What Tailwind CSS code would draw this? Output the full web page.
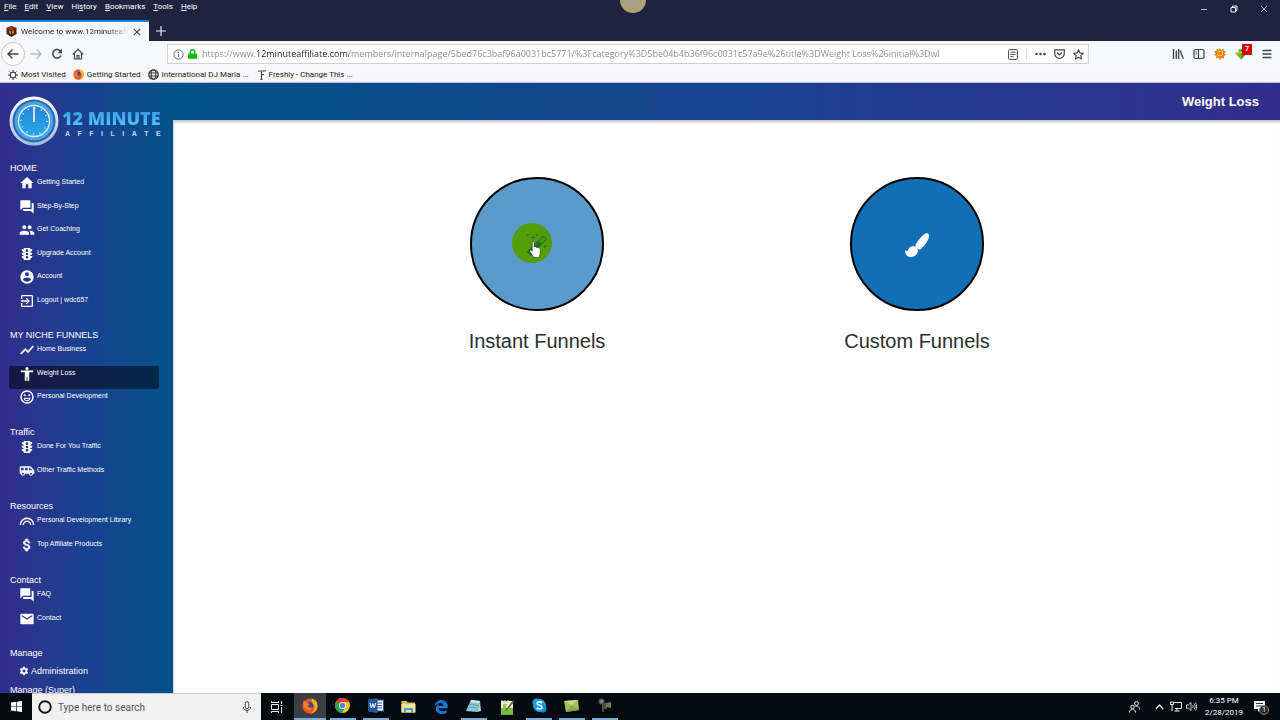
<!DOCTYPE html>
<html lang="en">
<head>
<meta charset="utf-8">
<title>12 Minute Affiliate – Weight Loss</title>
<script src="https://cdn.jsdelivr.net/npm/@tailwindcss/browser@4"></script>
</head>
<body class="relative flex h-screen flex-col overflow-hidden bg-white font-['Roboto',sans-serif] text-[9px] text-[#222]">

<svg class="hidden" aria-hidden="true">
  <symbol id="traffic" viewBox="0 0 24 24"><path d="M20 10h-3V8.860c1.720-.45 3-2 3-3.860h-3V4c0-.55-.45-1-1-1H8c-.55 0-1 .45-1 1v1H4c0 1.860 1.280 3.410 3 3.860V10H4c0 1.860 1.280 3.410 3 3.860V15H4c0 1.860 1.280 3.410 3 3.860V20c0 .55.45 1 1 1h8c.55 0 1-.45 1-1v-1.140c1.720-.45 3-2 3-3.860h-3v-1.140c1.720-.45 3-2 3-3.860zm-8 9a2 2 0 110-4 2 2 0 010 4zm0-5a2 2 0 110-4 2 2 0 010 4zm0-5a2 2 0 01-2-2 2 2 0 114 0 2 2 0 01-2 2z"/></symbol>
  <symbol id="forum" viewBox="0 0 24 24"><path d="M21 6h-2v9H6v2c0 .55.45 1 1 1h11l4 4V7c0-.55-.45-1-1-1zm-4 6V3c0-.55-.45-1-1-1H3c-.55 0-1 .45-1 1v14l4-4h10c.55 0 1-.45 1-1z"/></symbol>
</svg>

<header class="shrink-0">
  <div class="flex h-[20px] items-start justify-between bg-[#202340] text-white">
    <nav class="flex gap-[8px] pl-1 text-[8px] leading-[13px]" aria-label="Menu bar">
      <button><u>F</u>ile</button><button><u>E</u>dit</button><button><u>V</u>iew</button><button>Hi<u>s</u>tory</button><button><u>B</u>ookmarks</button><button><u>T</u>ools</button><button><u>H</u>elp</button>
    </nav>
    <div class="flex gap-[22px] pr-3 pt-[5px]">
      <button aria-label="Minimize"><svg class="h-2 w-2" viewBox="0 0 8 8" stroke="#bbb" fill="none"><path d="M1 4.500h6"/></svg></button>
      <button aria-label="Restore"><svg class="h-2 w-2" viewBox="0 0 8 8" stroke="#eee" fill="none"><path d="M1 2.500h4.500v4.500H1zM2.500 2.500V1h4.500v4.500H5.500"/></svg></button>
      <button aria-label="Close"><svg class="h-2 w-2" viewBox="0 0 8 8" stroke="#ddd" stroke-width=".8" fill="none"><path d="M1 1l6 6M7 1L1 7"/></svg></button>
    </div>
  </div>
  <div class="flex h-[21px] bg-[#202340]">
    <div class="flex w-[149px] items-center border-t-2 border-[#1587e0] bg-[#f6f8fb] pl-[6px] text-[8px]">
      <svg class="mr-1 h-[11px] w-[11px] shrink-0" viewBox="0 0 11 11"><path d="M5.500 0L10.500 2v6L5.500 11 .5 8V2z" fill="#4b2411"/><path d="M5.500 0L10.500 2 5.500 4.500.5 2z" fill="#8a4318"/><path d="M3 4l2.500 1.500L8 4v3L5.500 8.500 3 7z" fill="#d08028"/><path d="M5.500 5v4" stroke="#4b2411"/></svg>
      <span class="w-[108px] overflow-hidden bg-linear-to-r from-[#222] from-80% to-transparent bg-clip-text whitespace-nowrap text-transparent">Welcome to www.12minuteaff</span>
      <button class="ml-1" aria-label="Close tab"><svg class="h-2 w-2" viewBox="0 0 8 8" stroke="#444" stroke-width="1.100"><path d="M.8.8l6.400 6.400M7.200.8L.8 7.200"/></svg></button>
    </div>
    <button class="ml-[7px]" aria-label="New tab"><svg class="h-[10px] w-[10px]" viewBox="0 0 10 10" stroke="#e4e6ee" stroke-width="1.200"><path d="M5 0v10M0 5h10"/></svg></button>
  </div>
  <div class="flex h-[26px] items-center bg-[#f6f8fb] text-[#444]">
    <div class="flex w-[167px] items-center gap-[9px] pl-[1px]">
      <button class="flex h-6 w-6 items-center justify-center rounded-full border border-[#c5c5c9] bg-white" aria-label="Back"><svg class="h-3 w-3" viewBox="0 0 12 12" fill="none" stroke="currentColor" stroke-width="1.500"><path d="M11.500 6H1M5.500 1.500L1 6l4.500 4.500"/></svg></button>
      <button aria-label="Forward" class="text-[#bbb]"><svg class="-ml-1 h-3 w-3" viewBox="0 0 12 12" fill="none" stroke="currentColor" stroke-width="1.300"><path d="M.5 6H11M6.500 1.500L11 6l-4.500 4.500"/></svg></button>
      <button aria-label="Reload"><svg class="h-3 w-3" viewBox="0 0 12 12" fill="none" stroke="currentColor" stroke-width="1.500"><path d="M9.700 3.500A4.300 4.300 0 1010 7.500"/><path d="M11 .8v4.400H6.600z" fill="currentColor" stroke="none"/></svg></button>
      <button aria-label="Home"><svg class="h-3 w-3" viewBox="0 0 12 12" fill="none" stroke="currentColor" stroke-width="1.200"><path d="M.8 6.500L6 1.200l5.200 5.300M2.500 5.500V11h7V5.500M5 11V7.500h2V11"/></svg></button>
    </div>
    <div class="flex h-5 w-[922px] items-center border border-[#cfd1d6] bg-white pl-[5px]">
      <button aria-label="Site information"><svg class="h-[11px] w-[11px]" viewBox="0 0 11 11" fill="none" stroke="#666"><circle cx="5.500" cy="5.500" r="4.600"/><path d="M5.500 4.800v3.200M5.500 2.700v1.200"/></svg></button>
      <svg class="ml-[4px] h-[10px] w-[9px]" viewBox="0 0 9 10"><path d="M2.200 5V3a2.300 2.300 0 014.600 0v2" fill="none" stroke="#1cb31c" stroke-width="1.400"/><rect y="4.400" width="9" height="5.400" rx="1" fill="#12bc00"/></svg>
      <input aria-label="Address" class="ml-[5px] min-w-0 flex-1 bg-[linear-gradient(90deg,#8a8a8a_53px,#222_53px,#222_147px,#8a8a8a_147px)] bg-clip-text font-['Open_Sans',sans-serif] text-[9px] text-transparent outline-none" value="https://www.12minuteaffiliate.com/members/internalpage/5bed76c3baf96a0031bc5771/%3Fcategory%3D5be04b4b36f96c0031c57a9e%26title%3DWeight Loss%26initial%3Dwl">
      <div class="flex items-center gap-2 pr-1">
        <button aria-label="Reader view"><svg class="h-[11px] w-[10px]" viewBox="0 0 10 11" fill="none" stroke="currentColor"><rect x=".6" y=".6" width="8.800" height="9.800" rx="1"/><path d="M2.500 3.200h5M2.500 5.400h5M2.500 7.600h3"/></svg></button>
        <span class="h-3 border-l border-[#ddd]"></span>
        <button aria-label="Page actions"><svg class="h-3 w-[11px]" viewBox="0 0 11 12" fill="currentColor"><circle cx="1.500" cy="6" r="1.300"/><circle cx="5.500" cy="6" r="1.300"/><circle cx="9.500" cy="6" r="1.300"/></svg></button>
        <button aria-label="Save to Pocket"><svg class="h-[10px] w-[11px]" viewBox="0 0 11 10" fill="none" stroke="currentColor" stroke-width="1.200"><path d="M.7.8h9.600v3.700a4.800 4.800 0 01-9.600 0zM3 3.500L5.500 6 8 3.500"/></svg></button>
        <button aria-label="Bookmark"><svg class="h-[11px] w-[11px]" viewBox="0 0 11 11" fill="none" stroke="currentColor" stroke-width="1.100" stroke-linejoin="round"><path d="M5.500.8l1.400 3.100 3.400.4-2.500 2.300.7 3.400-3-1.700-3 1.700.7-3.400L.7 4.300l3.400-.4z"/></svg></button>
      </div>
    </div>
    <div class="ml-auto flex items-center gap-[9px] pr-2">
      <button aria-label="Library"><svg class="h-3 w-3" viewBox="0 0 12 12" stroke="currentColor" stroke-width="1.400"><path d="M1.500 1v10M4.300 2.500V11M6.700 1v10M8.300 2.500l3 8.500"/></svg></button>
      <button aria-label="Sidebars"><svg class="h-3 w-3" viewBox="0 0 12 12" fill="none" stroke="currentColor" stroke-width="1.200"><rect x="1" y="1.500" width="10" height="9" rx="1.500"/><path d="M5.500 1.500v9M2.500 4h1.500M2.500 6h1.500"/></svg></button>
      <button aria-label="Splat extension"><svg class="h-3 w-3" viewBox="0 0 12 12"><path d="M6 0l1.300 2L9.500.8 9.600 3l2.200.2L10.500 5.500l1.400 1.800-2 .6.2 2.600-2.400-.8L6 12 4.500 9.800l-2.600.8.4-2.600L.1 7l1.400-1.700L.2 3l2.300-.1L2.700.8l2 1.100z" fill="#f08020"/><path d="M3 4l2-1 1 1 2-1 1 1-1 1 1 1-2 2-1-1-2 1-1-2" fill="none" stroke="#ffd23c"/><path d="M2.700 2.800L4.500.9M8 2.500L9.600.8" stroke="#62a620"/></svg></button>
      <button class="relative mr-[6px]" aria-label="Downloads, 7"><svg class="h-3 w-3" viewBox="0 0 12 12"><path d="M3.500 1h5v4H12l-6 6.500L0 5h3.500z" fill="#72b632"/><path d="M6 1h2.500v4H12L6 11.500z" fill="#4d9426"/><path d="M1 4h7v1.500H1z" fill="#d8c447"/></svg><span class="absolute -top-1 left-[7px] h-[11px] w-[10px] bg-[#d7000f] text-[7px] leading-[11px] font-bold text-white">7</span></button>
      <button aria-label="Open menu"><svg class="h-3 w-[10px]" viewBox="0 0 10 12" stroke="currentColor" stroke-width="1.300"><path d="M.5 2.500h9M.5 6h9M.5 9.500h9"/></svg></button>
    </div>
  </div>
  <nav class="flex h-[16px] items-center gap-[7px] border-b border-[#b9bcd0] bg-[#f7f7f9] pl-2 text-[8px] leading-[15px]" aria-label="Bookmarks">
    <a href="#" class="flex items-center gap-[3px]"><svg class="h-[10px] w-[10px]" viewBox="0 0 10 10" fill="none" stroke="#444"><circle cx="5" cy="5" r="2.800" stroke-width="1.200"/><path d="M5 0v2M5 8v2M0 5h2M8 5h2M1.500 1.500l1.300 1.300M7.200 7.200l1.300 1.300M8.500 1.500L7.200 2.800M2.800 7.200L1.500 8.500"/></svg>Most Visited</a>
    <a href="#" class="flex items-center gap-[3px]"><svg class="h-[11px] w-[11px]" viewBox="0 0 32 32"><use href="#firefox"/></svg>Getting Started</a>
    <a href="#" class="flex items-center gap-[3px]"><svg class="h-[11px] w-[11px]" viewBox="0 0 11 11" fill="none" stroke="#333"><circle cx="5.500" cy="5.500" r="4.700" stroke-width="1.200"/><ellipse cx="5.500" cy="5.500" rx="2.300" ry="4.700"/><path d="M1 4h9M1 7h9"/></svg>International DJ Maria ...</a>
    <a href="#" class="flex items-center gap-[3px]"><svg class="ml-[2px] h-[10px] w-[8px]" viewBox="0 0 8 10" fill="none" stroke="#333"><path d="M0 1.500C2 .5 3 1.500 8 .8M3.500 1.500V9.500M3.500 4.700h2.500M2.500 9.500h2"/></svg>Freshly - Change This ...</a>
  </nav>
</header>

<div class="flex min-h-0 flex-1 font-['Liberation_Sans',Arial,sans-serif]">
  <aside class="w-[173px] shrink-0 overflow-hidden bg-linear-to-r from-[#302e8b] via-[#17428f] to-[#00528b] text-white">
    <a href="#" class="flex h-[78px] items-start gap-[3px] pl-[9px] pt-[13px]" aria-label="12 Minute Affiliate">
      <svg class="h-[50px] w-[50px] shrink-0" viewBox="0 0 50 50">
        <defs>
          <linearGradient id="rim" x2="0" y2="1"><stop stop-color="#fff"/><stop offset="1" stop-color="#a9bad6"/></linearGradient>
          <linearGradient id="face" x2="0" y2="1"><stop stop-color="#2785d4"/><stop offset="1" stop-color="#27a9ee"/></linearGradient>
        </defs>
        <circle cx="25" cy="25" r="24.500" fill="url(#rim)"/>
        <circle cx="25" cy="25" r="21.500" fill="#2567b4"/><circle cx="25" cy="25" r="19.500" fill="#4aa5e4"/>
        <circle cx="25" cy="25" r="15.500" fill="url(#face)" stroke="#d9f2ff" stroke-width="1.300"/>
        <circle cx="25" cy="25" r="13" fill="none" stroke="#fff" stroke-width="1.400" stroke-dasharray="1 5.807"/>
        <path d="M25 11v15" stroke="#fff" stroke-width="1.500"/>
      </svg>
      <span class="flex flex-col pt-[10px]"><span class="bg-linear-to-b from-[#2b93e2] to-[#62cbff] bg-clip-text font-['Open_Sans',sans-serif] text-[18px] leading-[24px] font-extrabold whitespace-nowrap text-transparent">12 MINUTE</span><span class="flex justify-between pl-[3px] text-[7px] leading-[8px] font-bold text-[#c9d8f0]"><span>A</span><span>F</span><span>F</span><span>I</span><span>L</span><span>I</span><span>A</span><span>T</span><span>E</span></span></span>
    </a>
    <nav class="pl-[9px] text-[7px] leading-[14px]" aria-label="Members">
      <h2 class="pl-px text-[9px] leading-[14px]">HOME</h2>
      <ul class="mb-3 flex h-[141px] w-[150px] flex-col">
        <li class="flex-1"><a href="#" class="flex h-full items-start gap-[2px] pl-[10px]"><svg class="h-4 w-4" viewBox="0 0 24 24" fill="currentColor"><path d="M10 20v-6h4v6h5v-8h3L12 3 2 12h3v8z"/></svg>Getting Started</a></li>
        <li class="flex-1"><a href="#" class="flex h-full items-start gap-[2px] pl-[10px]"><svg class="h-4 w-4" fill="currentColor"><use href="#forum"/></svg>Step-By-Step</a></li>
        <li class="flex-1"><a href="#" class="flex h-full items-start gap-[2px] pl-[10px]"><svg class="h-4 w-4" viewBox="0 0 24 24" fill="currentColor"><path d="M16 11a3 3 0 100-6 3 3 0 000 6zm-8 0a3 3 0 100-6 3 3 0 000 6zm0 2c-2.330 0-7 1.170-7 3.500V19h14v-2.500c0-2.330-4.670-3.500-7-3.500zm8 0c-.29 0-.62.02-.97.05 1.160.84 1.970 1.970 1.970 3.450V19h6v-2.500c0-2.330-4.670-3.500-7-3.500z"/></svg>Get Coaching</a></li>
        <li class="flex-1"><a href="#" class="flex h-full items-start gap-[2px] pl-[10px]"><svg class="h-4 w-4" fill="currentColor"><use href="#traffic"/></svg>Upgrade Account</a></li>
        <li class="flex-1"><a href="#" class="flex h-full items-start gap-[2px] pl-[10px]"><svg class="h-4 w-4" viewBox="0 0 24 24" fill="currentColor"><path d="M12 2a10 10 0 100 20 10 10 0 000-20zm0 3a3 3 0 110 6 3 3 0 010-6zm0 14.200a7.200 7.200 0 01-6-3.220c.03-1.990 4-3.080 6-3.080s5.970 1.090 6 3.080a7.200 7.200 0 01-6 3.220z"/></svg>Account</a></li>
        <li class="flex-1"><a href="#" class="flex h-full items-start gap-[2px] pl-[10px]"><svg class="h-4 w-4" viewBox="0 0 24 24" fill="currentColor"><path d="M10.090 15.590L11.500 17l5-5-5-5-1.410 1.410L12.670 11H3v2h9.670l-2.580 2.590zM19 3H5a2 2 0 00-2 2v4h2V5h14v14H5v-4H3v4a2 2 0 002 2h14a2 2 0 002-2V5a2 2 0 00-2-2z"/></svg>Logout | wdc657</a></li>
      </ul>
      <h2 class="pl-px text-[9px] leading-[14px]">MY NICHE FUNNELS</h2>
      <ul class="mb-3 flex h-[71px] w-[150px] flex-col">
        <li class="flex-1"><a href="#" class="flex h-full items-start gap-[2px] pl-[10px]"><svg class="h-4 w-4" viewBox="0 0 24 24" fill="currentColor"><path d="M3.500 18.490l6-6.010 4 4L22 6.920l-1.410-1.410-7.090 7.970-4-4L2 16.990z" stroke="currentColor" stroke-width=".6"/></svg>Home Business</a></li>
        <li class="flex-1"><a href="#" aria-current="page" class="flex h-full items-start gap-[2px] rounded-[2px] bg-linear-to-r from-[#161746] to-[#032747] pl-[10px]"><svg class="h-4 w-4" viewBox="0 0 24 24" fill="currentColor"><path d="M12 2a2 2 0 110 4 2 2 0 010-4zm9 7h-6v13h-2v-6h-2v6H9V9H3V7h18z" stroke="currentColor" stroke-width=".7"/></svg>Weight Loss</a></li>
        <li class="flex-1"><a href="#" class="flex h-full items-start gap-[2px] pl-[10px]"><svg class="h-4 w-4" viewBox="0 0 24 24" fill="none" stroke="currentColor" stroke-width="2.200"><circle cx="12" cy="12" r="9"/><path d="M7.500 14h9a4.500 3.500 0 01-9 0z" stroke-width="1.500"/><circle cx="8.500" cy="9.500" r="1.500" fill="currentColor" stroke="none"/><circle cx="15.500" cy="9.500" r="1.500" fill="currentColor" stroke="none"/></svg>Personal Development</a></li>
      </ul>
      <h2 class="pl-px text-[9px] leading-[14px]">Traffic</h2>
      <ul class="mb-3 flex h-[48px] w-[150px] flex-col">
        <li class="flex-1"><a href="#" class="flex h-full items-start gap-[2px] pl-[10px]"><svg class="h-4 w-4" fill="currentColor"><use href="#traffic"/></svg>Done For You Traffic</a></li>
        <li class="flex-1"><a href="#" class="flex h-full items-start gap-[2px] pl-[10px]"><svg class="h-4 w-4" viewBox="0 0 24 24" fill="currentColor"><path d="M17 5H3a2 2 0 00-2 2v9h2a3 3 0 006 0h6a3 3 0 006 0h2v-5zM3 11V7h4v4zm3 6.500a1.500 1.500 0 110-3 1.500 1.500 0 010 3zM13 11H9V7h4zm5 6.500a1.500 1.500 0 110-3 1.500 1.500 0 010 3zM15 11V7h1l4 4z"/></svg>Other Traffic Methods</a></li>
      </ul>
      <h2 class="pl-px text-[9px] leading-[14px]">Resources</h2>
      <ul class="mb-3 flex h-[48px] w-[150px] flex-col">
        <li class="flex-1"><a href="#" class="flex h-full items-start gap-[2px] pl-[10px]"><svg class="h-4 w-4" viewBox="0 0 24 24" fill="none" stroke="currentColor" stroke-width="2.200"><path d="M2 18a10 10 0 0120 0M6.500 18a5.500 5.500 0 0111 0"/></svg>Personal Development Library</a></li>
        <li class="flex-1"><a href="#" class="flex h-full items-start gap-[2px] pl-[10px]"><svg class="h-4 w-4" viewBox="0 0 24 24" fill="currentColor"><path d="M11.800 10.900c-2.270-.59-3-1.200-3-2.150 0-1.090 1.010-1.850 2.700-1.850 1.780 0 2.440.85 2.500 2.100h2.210c-.07-1.720-1.120-3.300-3.210-3.810V3h-3v2.160c-1.940.42-3.500 1.680-3.500 3.610 0 2.310 1.910 3.460 4.700 4.130 2.500.6 3 1.480 3 2.410 0 .69-.49 1.790-2.700 1.790-2.060 0-2.870-.92-2.980-2.100h-2.200c.12 2.190 1.760 3.420 3.680 3.830V21h3v-2.150c1.950-.37 3.500-1.500 3.500-3.550 0-2.840-2.430-3.810-4.700-4.400z" stroke="currentColor"/></svg>Top Affiliate Products</a></li>
      </ul>
      <h2 class="pl-px text-[9px] leading-[14px]">Contact</h2>
      <ul class="mb-3 flex h-[47px] w-[150px] flex-col">
        <li class="flex-1"><a href="#" class="flex h-full items-start gap-[2px] pl-[10px]"><svg class="h-4 w-4" fill="currentColor"><use href="#forum"/></svg>FAQ</a></li>
        <li class="flex-1"><a href="#" class="flex h-full items-start gap-[2px] pl-[10px]"><svg class="h-4 w-4" viewBox="0 0 24 24" fill="currentColor"><path d="M20 4H4a2 2 0 00-2 2v12a2 2 0 002 2h16a2 2 0 002-2V6a2 2 0 00-2-2zm0 4l-8 5-8-5V6l8 5 8-5z"/></svg>Contact</a></li>
      </ul>
      <h2 class="pl-px text-[9px] leading-[14px]">Manage</h2>
      <a href="#" class="mt-1 mb-[5px] flex items-center gap-[2px] pl-[10px] text-[9px] leading-[14px]"><svg class="h-[10px] w-[10px]" viewBox="0 0 24 24"><path fill="currentColor" d="M19.400 13l.1-1-.1-1 2.200-1.700c.2-.1.300-.4.100-.6l-2-3.500c-.1-.2-.4-.3-.6-.2l-2.500 1-1.700-1L14.500 2.400a.5.5 0 00-.5-.4h-4a.5.5 0 00-.5.400L9.100 5l-1.700 1-2.500-1c-.2-.1-.5 0-.6.200l-2 3.500c-.1.200 0 .5.100.6L4.600 11l-.1 1 .1 1-2.200 1.700c-.1.100-.2.400-.1.600l2 3.500c.1.200.4.300.6.200l2.500-1 1.700 1 .4 2.600c0 .2.200.4.500.4h4c.3 0 .5-.2.500-.4l.4-2.600 1.700-1 2.500 1c.2.100.5 0 .6-.2l2-3.500c.1-.2.100-.5-.1-.6zM12 15.500a3.500 3.500 0 110-7 3.500 3.500 0 010 7z"/></svg>Administration</a>
      <h2 class="pl-px text-[9px] leading-[14px]">Manage (Super)</h2>
    </nav>
  </aside>

  <div class="flex min-w-0 flex-1 flex-col">
    <div class="flex h-[37px] shrink-0 items-center justify-end bg-linear-to-r from-[#00528b] via-[#17448f] to-[#302e8b] pr-[21px]">
      <h1 class="text-[13px] font-bold text-white">Weight Loss</h1>
    </div>
    <main class="flex flex-1 justify-center border-l border-[#ccd5de] pt-[57px] text-[20px] leading-6 text-[#2b2e31] shadow-[inset_0_4px_3px_-2px_#b8bcc4]">
      <a href="#" class="flex w-[380px] flex-col items-center gap-[18px]">
        <span class="relative flex h-[134px] w-[134px] items-center justify-center rounded-full border-2 border-black bg-[#5b9bcb]">
          <span class="absolute top-[44px] left-[40px] h-[40px] w-[40px] rounded-full bg-[#549d06]"></span>
          <svg class="relative h-6 w-6" viewBox="0 0 24 24" fill="none" stroke="#207a28"><path d="M2 20L18 4l3.500 3.500L5.500 23.500z" fill="#23701c"/><path d="M13.500 9L18.500 4 21.500 7 16.500 12z" fill="#4a990d" stroke="#207a28"/><path d="M8 3v5M5.500 5.500h5M3 2v2M2 3h2M12 2v2M11 3h2M20 13v3M18.500 14.500h3" stroke-width=".9"/></svg>
          <svg class="absolute top-[62px] left-[57px] h-[18px] w-3" viewBox="0 0 12 18" fill="#fff" stroke="#222" stroke-width=".6"><path d="M3.200 1.500c0-1.400 2-1.400 2 0V6c.6-.7 1.800-.5 2 .4.600-.5 1.700-.3 1.900.6.800-.5 2.100-.1 2.100 1.100v4.200c0 1.600-1 2.300-1.200 4.200H4.500C4.200 14.700 1.900 12.500.8 10.300c-.5-1.200.7-1.900 1.600-1l.8.9z"/></svg>
        </span>
        Instant Funnels
      </a>
      <a href="#" class="flex w-[380px] flex-col items-center gap-[18px]">
        <span class="flex h-[134px] w-[134px] items-center justify-center rounded-full border-2 border-black bg-[#126fb3]">
          <svg class="mt-[2px] h-6 w-6" viewBox="0 0 24 24" fill="#fff"><path d="M20 .7c2.500-1.300 5 .6 4 3.600-1.200 4-4.300 8.300-7.800 11.500-1.300 1.200-3.200.7-4.500-.5-1.300-1.300-1.800-2.800-.8-4.300C13.400 7 17 2.600 20 .7z"/><path d="M7.500 13.300c3.200-.3 5.800 2.400 5.300 5.200-.7 3.500-3.800 5.500-7.300 5.500-3.500 0-5.500-3-5.500-7 1.200.9 2 1.500 2.700.5 1-2.200 2.300-4 4.800-4.200z"/></svg>
        </span>
        Custom Funnels
      </a>
    </main>
  </div>
</div>

<footer class="flex h-[27px] shrink-0 bg-[#060b11] text-white">
  <button class="flex w-8 items-center justify-center" aria-label="Start"><svg class="h-[11px] w-[11px]" viewBox="0 0 11 11" fill="#fff"><path d="M0 1.500L5 .8v4.400H0zM5.700.7L11 0v5.200H5.700zM0 5.800h5v4.400l-5-.7zM5.700 5.800H11V11l-5.300-.7z"/></svg></button>
  <div class="flex w-[229px] items-center border-t border-[#ccc] bg-[#f1f1f1] pl-[6px]">
    <svg class="h-[14px] w-[14px]" viewBox="0 0 14 14"><circle cx="7" cy="7" r="5.800" fill="none" stroke="#151515" stroke-width="1.900"/></svg>
    <input type="search" aria-label="Search" placeholder="Type here to search" class="ml-[6px] w-[180px] bg-transparent text-[10px] outline-none placeholder:text-[#555]">
    <button class="ml-1" aria-label="Voice search"><svg class="h-3 w-[10px]" viewBox="0 0 10 12" fill="none" stroke="#444"><rect x="3.200" y=".6" width="3.600" height="7" rx="1.800"/><path d="M1.500 6c0 4.500 7 4.500 7 0M5 9.400V12"/></svg></button>
  </div>
  <div class="flex w-[360px]">
    <button class="flex flex-1 items-center justify-center" aria-label="Task view"><svg class="h-3 w-3" viewBox="0 0 12 12" fill="none" stroke="#eee"><path d="M.5 3.500h7v5h-7zM.5 0v1.500h7V0M.5 12v-1.500h7V12M10.500 0v3M10.500 6v6M9.500 4.500h2"/></svg></button>
    <button class="flex flex-1 items-center justify-center border-b-2 border-[#7ba9d6] bg-[#3b3e42]" aria-label="Firefox"><svg class="h-4 w-4" viewBox="0 0 32 32"><symbol id="firefox" viewBox="0 0 32 32"><circle cx="16" cy="16" r="15" fill="#f4511e"/><path d="M19 1c9 2 13 9 12 16-1 9-8 14-15 14 7-3 10-8 9-13-1-6-6-7-6-17z" fill="#ffb31a"/><circle cx="15" cy="15" r="7.500" fill="#3a48a8"/><path d="M3 5c3 2 5 4 8 4l4 4c-3 1-4 3-2 5s5 2 8 0c-1 5-5 7-10 6C4 22 1 15 3 5z" fill="#ff7a18"/></symbol><use href="#firefox"/></svg></button>
    <button class="flex flex-1 items-center justify-center" aria-label="Chrome"><span class="flex h-full w-[26px] items-center justify-center border-b-2 border-[#7ba9d6]"><svg class="h-[15px] w-[15px]" viewBox="0 0 30 30"><circle cx="15" cy="15" r="15" fill="#fbc116"/><path d="M15 15L2 7.500A15 15 0 0128 8H15z" fill="#e33b2e"/><path d="M2 7.500A15 15 0 0014 30l7-12-6-3z" fill="#2d9f48"/><circle cx="15" cy="15" r="7" fill="#fff"/><circle cx="15" cy="15" r="5.500" fill="#4285f4"/></svg></span></button>
    <button class="flex flex-1 items-center justify-center" aria-label="Word"><span class="flex h-full w-[26px] items-center justify-center border-b-2 border-[#7ba9d6]"><svg class="h-[15px] w-4" viewBox="0 0 16 15"><rect x="8" y="2" width="7.500" height="11" fill="#fff" stroke="#2b579a"/><path d="M9 5h5M9 7.500h5M9 10h5" stroke="#2b579a"/><path d="M0 1.500L9.500 0v15L0 13.500z" fill="#2b579a"/><path d="M2 5l1.400 5L4.800 5.500 6.200 10 7.600 5" stroke="#fff" fill="none"/></svg></span></button>
    <button class="flex flex-1 items-center justify-center" aria-label="File Explorer"><svg class="h-[13px] w-[15px]" viewBox="0 0 15 13"><path d="M.5 1h5l1 1.500H14v10H.5z" fill="#e7bd55"/><path d="M.5 4H14.500v8.500H.5z" fill="#fbe497"/><path d="M3 12.500V8h9v4.500h-2V10H5v2.500z" fill="#46a0d8"/></svg></button>
    <button class="flex flex-1 items-center justify-center" aria-label="Edge"><svg class="h-[14px] w-[14px]" viewBox="0 0 28 28"><path d="M1 12.500C2 5 7.500 0 15 0c8 0 12.500 6 12.500 13v3.500H9.500c.3 7 9.500 7.500 15.500 3.500v6C15 30.500 3.500 27.500 3.500 18c0-5 3-8.500 6.500-10.500-1 1.500-1.300 2.500-1.400 4h10.200C19 5 9 3.500 1 12.500z" fill="#1a78d2"/></svg></button>
    <button class="flex flex-1 items-center justify-center" aria-label="Notepad"><span class="flex h-full w-[26px] items-center justify-center border-b-2 border-[#7ba9d6]"><svg class="h-[14px] w-[15px]" viewBox="0 0 15 14"><path d="M5 1l9 1-3 11L0 12z" fill="#8fc9d6"/><path d="M5 1l9 1-.5 2-9-1z" fill="#d6eef0"/><path d="M14 2l1 10-4 1z" fill="#b8d2d8"/><path d="M4 5.500l8 .8M3 8l8 .8" stroke="#5ba2b8"/></svg></span></button>
    <button class="flex flex-1 items-center justify-center" aria-label="Notepad++"><svg class="h-4 w-[14px]" viewBox="0 0 14 16"><path d="M1 2h12v13.500H1z" fill="#e8f1cf"/><path d="M1 9h12v6.500H1z" fill="#77bd3b"/><path d="M2 1v2M5 1v2M8 1v2" stroke="#ccc"/><path d="M13.500 1L6 10l-1 2 2-1L14 3z" fill="#5d5230"/><path d="M3 6h4M3 8h3" stroke="#4b8f2d"/></svg></button>
    <button class="flex flex-1 items-center justify-center" aria-label="Skype"><span class="flex h-full w-[26px] items-center justify-center border-b-2 border-[#7ba9d6]"><svg class="h-[15px] w-[15px]" viewBox="0 0 15 15"><circle cx="7.500" cy="7.500" r="6.500" fill="#10a5e8"/><circle cx="4.500" cy="4.500" r="4" fill="#10a5e8"/><circle cx="10.500" cy="10.500" r="4" fill="#0b90d8"/><path d="M10 5C8.800 3.300 5 3.500 5.200 5.500 5.500 7.700 10 6.800 10 9.300c0 2.200-4 2.200-5.200.4" fill="none" stroke="#fff" stroke-width="1.600"/></svg></span></button>
    <button class="flex flex-1 items-center justify-center" aria-label="Sticky notes"><span class="flex h-full w-[26px] items-center justify-center border-b-2 border-[#7ba9d6]"><svg class="h-[14px] w-[15px]" viewBox="0 0 15 14"><path d="M0 2l14-1 1 10-13 2z" fill="#a6bb5b"/><path d="M0 2l7 4 7-5z" fill="#c8d98a"/><path d="M2 13l5-7 8 5" fill="#8ca344"/></svg></span></button>
    <button class="flex flex-1 items-center justify-center" aria-label="Camera recorder"><span class="flex h-full w-[26px] items-center justify-center border-b-2 border-[#7ba9d6]"><svg class="h-[15px] w-[14px]" viewBox="0 0 14 15"><circle cx="3.500" cy="3.500" r="3" fill="#55595a"/><circle cx="3.500" cy="3.500" r="1.200" fill="#999"/><path d="M4 5h5v6H6v3H4z" fill="#4b4e4b"/><path d="M8 5l5-1v6l-5-1z" fill="#6c8148"/></svg></span></button>
  </div>
  <div class="ml-auto flex items-center pr-[14px]">
    <button aria-label="People"><svg class="mr-[15px] h-3 w-[11px]" viewBox="0 0 11 12" fill="none" stroke="#eee"><circle cx="3.500" cy="6" r="1.800"/><path d="M.5 11.500c0-4.500 6-4.500 6 0"/><circle cx="7.500" cy="2.500" r="1.900"/><path d="M6.500 5.500c2-1 4 .5 4 3"/></svg></button>
    <button aria-label="Show hidden icons"><svg class="mr-[6px] h-2 w-[9px]" viewBox="0 0 9 8" fill="none" stroke="#eee" stroke-width="1.200"><path d="M.8 6l3.700-4 3.700 4"/></svg></button>
    <button aria-label="Network"><svg class="mr-1 h-[11px] w-3" viewBox="0 0 12 11" fill="none" stroke="#eee"><path d="M4 1.500h7.500v6H5M7 7.500v2.500M4.500 10h5M.5 1h3v2.500h-3zM2 3.500V10"/></svg></button>
    <button aria-label="Volume"><svg class="mr-[8px] h-[11px] w-[11px]" viewBox="0 0 11 11" fill="none" stroke="#ddd" stroke-width=".9"><path d="M.5 3.800h2L5 1.500v8L2.500 7.200h-2zM6.500 4c.8 1 .8 2 0 3M8 2.500c1.500 2 1.500 4 0 6M9.500 1.500c1.500 2.500 1.500 5.500 0 8"/></svg></button>
    <time class="mr-[11px] text-center text-[8px] leading-3">6:35 PM<br>2/28/2019</time>
    <button class="relative" aria-label="Notifications, 1"><svg class="h-[13px] w-3" viewBox="0 0 12 13" fill="#fff"><path d="M0 1h11v8H7l-3 3V9H0z"/><path d="M2 3.500h7M2 6h7" stroke="#333"/></svg><span class="absolute top-[5px] left-[5px] h-[10px] w-[10px] rounded-full border border-[#888] bg-[#25282c] text-[7px] leading-[8px]">1</span></button>
  </div>
</footer>

<span class="absolute -top-[13px] left-[620px] h-[26px] w-[26px] rounded-full bg-radial from-[#aaa290] to-[#a9a363]"></span>
</body>
</html>
